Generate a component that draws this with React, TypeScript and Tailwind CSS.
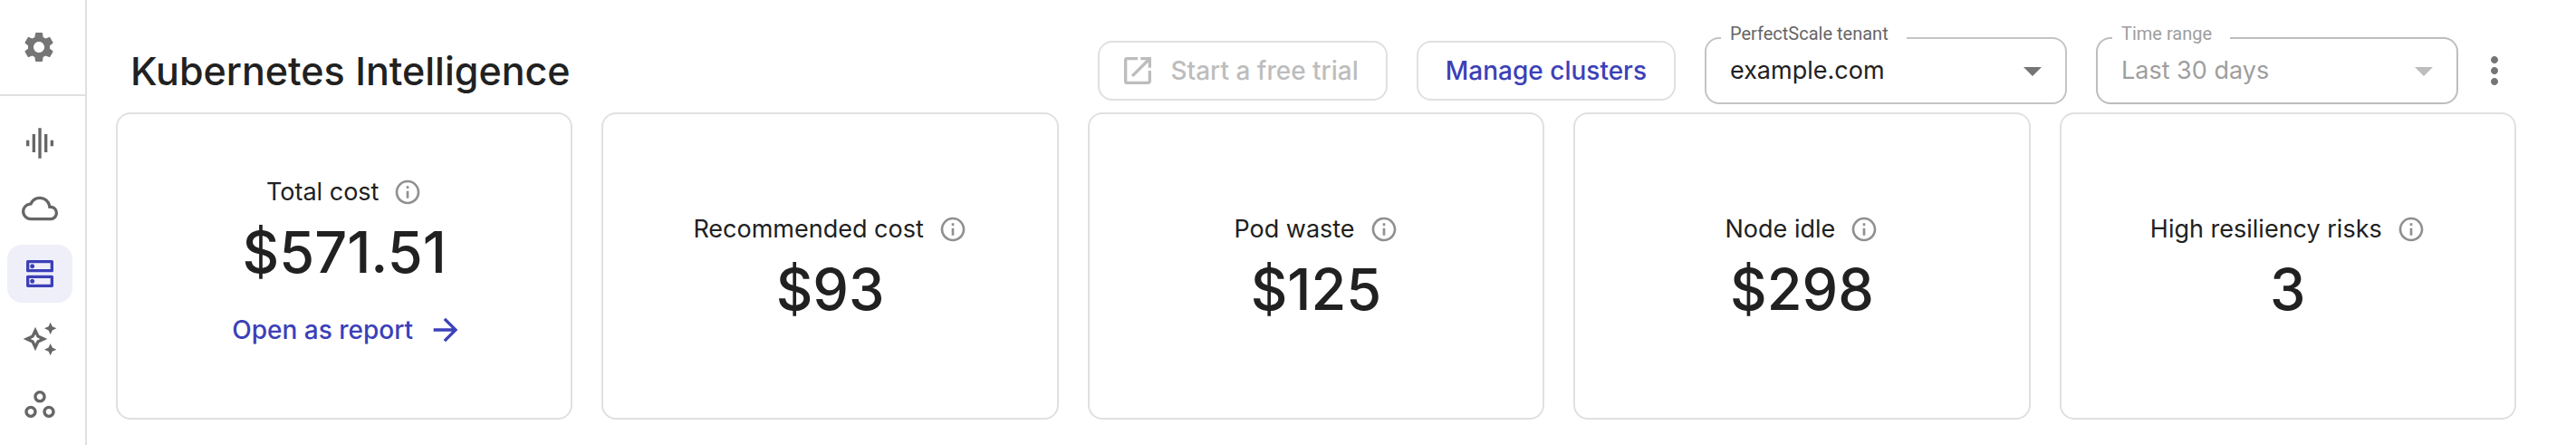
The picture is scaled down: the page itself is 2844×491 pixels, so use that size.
import React, { useState } from "react";
import type { IconType } from "react-icons";
import {
  MdArrowDropDown,
  MdArrowForward,
  MdGraphicEq,
  MdMoreVert,
  MdOpenInNew,
  MdOutlineAutoAwesome,
  MdOutlineCloud,
  MdOutlineDns,
  MdOutlineInfo,
  MdOutlineWorkspaces,
  MdSettings,
} from "react-icons/md";
import clsx from "clsx";

const navItems: { label: string; icon: IconType }[] = [
  { label: "Activity", icon: MdGraphicEq },
  { label: "Cloud", icon: MdOutlineCloud },
  { label: "Kubernetes", icon: MdOutlineDns },
  { label: "Insights", icon: MdOutlineAutoAwesome },
  { label: "Workspaces", icon: MdOutlineWorkspaces },
];

const stats: { label: string; value: string; report?: boolean }[] = [
  { label: "Total cost", value: "$571.51", report: true },
  { label: "Recommended cost", value: "$93" },
  { label: "Pod waste", value: "$125" },
  { label: "Node idle", value: "$298" },
  { label: "High resiliency risks", value: "3" },
];

const Sidebar = () => {
  const [active, setActive] = useState("Kubernetes");

  return (
    <aside className="w-24 shrink-0 border-r-2 border-[#e0e0e0]">
      <div className="border-b-2 border-[#e0e0e0] px-2 py-5">
        <button
          aria-label="Settings"
          className="flex h-16 w-[70px] items-center justify-center text-[#757575]"
        >
          <MdSettings className="size-10" />
        </button>
      </div>
      <nav className="flex flex-col gap-2 px-2 pt-5">
        {navItems.map(({ label, icon: Icon }) => (
          <button
            key={label}
            aria-label={label}
            onClick={() => setActive(label)}
            className={clsx(
              "flex h-16 w-[72px] items-center justify-center rounded-2xl",
              label === active ? "bg-[#efeffa] text-[#3c40b8]" : "text-[#666666]"
            )}
          >
            <Icon className="size-10" />
          </button>
        ))}
      </nav>
    </aside>
  );
};

const SelectField = ({
  id,
  label,
  options,
  disabled = false,
}: {
  id: string;
  label: string;
  options: string[];
  disabled?: boolean;
}) => (
  <div className="relative w-[400px]">
    <label
      htmlFor={id}
      className={clsx(
        "absolute -top-4 left-[18px] bg-white pr-5 pl-[10px] font-[Roboto,sans-serif] text-[20px] leading-6",
        disabled ? "text-[#9e9e9e]" : "text-[#666666]"
      )}
    >
      {label}
    </label>
    <select
      id={id}
      disabled={disabled}
      className={clsx(
        "h-[74px] w-full appearance-none rounded-2xl border-2 bg-transparent pr-16 pl-[26px] text-[27px] opacity-100",
        disabled ? "border-[#bdbdbd] text-[#9e9e9e]" : "border-[#c4c4c4] text-[#212121]"
      )}
    >
      {options.map((option) => (
        <option key={option}>{option}</option>
      ))}
    </select>
    <MdArrowDropDown
      className={clsx(
        "pointer-events-none absolute top-[13px] right-[14px] size-12",
        disabled ? "text-[#bdbdbd]" : "text-[#757575]"
      )}
    />
  </div>
);

const StatCard = ({ label, value, report }: { label: string; value: string; report?: boolean }) => (
  <section className="flex min-h-[339px] flex-col items-center justify-center rounded-2xl border-2 border-[#e0e0e0]">
    <div className="flex items-center gap-4">
      <h2 className="text-[27px] leading-[42px]">{label}</h2>
      <MdOutlineInfo className="size-8 text-[#909090]" />
    </div>
    <p className="mt-2 text-[63px] leading-[74px] font-medium">{value}</p>
    {report && (
      <a
        href="#report"
        className="mt-4 flex h-[66px] items-center gap-4 pr-6 pl-8 text-[28px] font-medium text-[#3c40b8]"
      >
        Open as report
        <MdArrowForward className="size-10" />
      </a>
    )}
  </section>
);

const App = () => {
  return (
    <div className="flex min-h-screen bg-white font-[Inter,sans-serif] text-[#212121]">
      <Sidebar />
      <main className="min-w-0 flex-1 pt-8 pr-[66px] pl-8">
        <header className="flex min-h-[92px] items-center gap-8">
          <h1 className="flex-1 pl-4 text-[43px] font-medium">Kubernetes Intelligence</h1>
          <button
            disabled
            className="flex h-[66px] items-center gap-4 rounded-2xl border-2 border-[#e0e0e0] pr-[30px] pl-[22px] text-[28px] font-medium text-[#bdbdbd]"
          >
            <MdOpenInNew className="size-10" />
            Start a free trial
          </button>
          <button className="h-[66px] rounded-2xl border-2 border-[#e0e0e0] px-[30px] text-[28px] font-medium text-[#3c40b8]">
            Manage clusters
          </button>
          <SelectField id="tenant" label="PerfectScale tenant" options={["example.com"]} />
          <div className="flex items-center gap-4">
            <SelectField id="time-range" label="Time range" options={["Last 30 days"]} disabled />
            <button aria-label="More options" className="text-[#757575]">
              <MdMoreVert className="size-12" />
            </button>
          </div>
        </header>
        <div className="grid grid-cols-5 gap-8">
          {stats.map((stat) => (
            <StatCard key={stat.label} {...stat} />
          ))}
        </div>
      </main>
    </div>
  );
};

export default App;
